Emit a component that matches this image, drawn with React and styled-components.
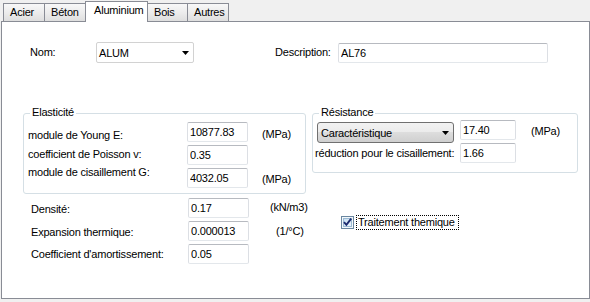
import React from "react";
import styled, { createGlobalStyle } from "styled-components";

const GlobalStyle = createGlobalStyle`
  html, body {
    margin: 0;
    padding: 0;
  }
  body {
    background: #f0f0f0;
    color: #000;
    font-family: "Liberation Sans", Arial, sans-serif;
    font-size: 11px;
    letter-spacing: -0.2px;
  }
`;

const Window = styled.div`
  width: 590px;
  height: 302px;
  background: #f0f0f0;
  overflow: hidden;
`;

const TabStrip = styled.div`
  position: relative;
  z-index: 1;
  display: flex;
  align-items: flex-end;
  height: 21px;
  padding-left: 4px;
`;

const Tab = styled.div`
  box-sizing: border-box;
  width: ${(p) => p.$w}px;
  height: ${(p) => (p.$active ? 21 : 18)}px;
  margin-left: -1px;
  margin-bottom: ${(p) => (p.$active ? -1 : 0)}px;
  padding: 2px 0 0 ${(p) => (p.$active ? 8 : 6)}px;
  border: 1px solid #898c95;
  border-bottom: none;
  background: ${(p) =>
    p.$active ? "#fff" : "linear-gradient(#f8f8f8, #ebebeb 55%, #dedede)"};
  line-height: 13px;
  white-space: nowrap;
`;

const Panel = styled.div`
  box-sizing: border-box;
  width: 589px;
  height: 278px;
  margin-left: 1px;
  border: 1px solid #898c95;
  background: #fff;
`;

const TopRow = styled.div`
  display: flex;
  align-items: center;
  height: 21px;
  margin-top: 20px;
  padding-left: 28px;
`;

const FieldLabel = styled.div`
  width: ${(p) => p.$w}px;
  margin-left: ${(p) => p.$ml || 0}px;
  line-height: ${(p) => p.$lh || 13}px;
  white-space: nowrap;
`;

const TextBox = styled.input`
  box-sizing: border-box;
  width: ${(p) => p.$w}px;
  height: 20px;
  margin: 0;
  padding: 0 2px;
  border: 1px solid;
  border-color: #b7bac0 #dcdfe4 #e3e7eb #dcdfe4;
  border-radius: 2px;
  background: #fff;
  color: #000;
  font-family: inherit;
  font-size: 11px;
  letter-spacing: -0.2px;
  outline: none;
`;

const Combo = styled.div`
  box-sizing: border-box;
  display: flex;
  align-items: center;
  justify-content: space-between;
  width: ${(p) => p.$w}px;
  height: 21px;
  margin-left: ${(p) => p.$ml || 0}px;
  padding: 0 4px 0 ${(p) => (p.$button ? 3 : 2)}px;
  border: 1px solid ${(p) => (p.$button ? "#707070" : "#d2d2d2")};
  border-radius: ${(p) => (p.$button ? 3 : 2)}px;
  background: ${(p) =>
    p.$button
      ? "linear-gradient(#f2f2f2, #ebebeb 49%, #dddddd 50%, #cfcfcf)"
      : "#fff"};
  white-space: nowrap;
`;

const Arrow = () => (
  <svg width="7" height="4" viewBox="0 0 7 4">
    <path d="M0 0h7L3.5 4z" fill="#000" />
  </svg>
);

const GroupsRow = styled.div`
  display: flex;
  align-items: flex-start;
  margin-top: 50px;
  padding-left: 21px;
`;

const Group = styled.div`
  position: relative;
  box-sizing: border-box;
  display: flex;
  align-items: flex-start;
  width: ${(p) => p.$w}px;
  height: ${(p) => p.$h}px;
  margin-left: ${(p) => p.$ml || 0}px;
  padding-left: ${(p) => p.$pl || 0}px;
  border: 1px solid #d5dfe5;
  border-radius: 3px;
`;

const Legend = styled.span`
  position: absolute;
  top: -8px;
  left: 6px;
  padding: 0 2px;
  background: #fff;
  line-height: 13px;
`;

const Column = styled.div`
  display: flex;
  flex-direction: column;
  align-items: flex-start;
  gap: ${(p) => p.$gap || 0}px;
  width: ${(p) => (p.$w ? `${p.$w}px` : "auto")};
  margin-left: ${(p) => p.$ml || 0}px;
  margin-top: ${(p) => p.$mt || 0}px;
  padding-top: ${(p) => p.$pt || 0}px;
  padding-left: ${(p) => p.$pl || 0}px;
`;

const Unit = styled.div`
  margin-top: ${(p) => p.$mt || 0}px;
  margin-left: ${(p) => p.$ml || 0}px;
  line-height: ${(p) => p.$lh || 13}px;
  white-space: nowrap;
`;

const BottomRow = styled.div`
  display: flex;
  align-items: flex-start;
  margin-top: 4px;
  padding-left: 29px;
`;

const CheckWrap = styled.label`
  display: flex;
  align-items: center;
  gap: 2px;
  height: 15px;
  margin-top: 17px;
`;

const CheckText = styled.span`
  padding: 0 3px 0 1px;
  border: 1px dotted #000;
  line-height: 13px;
  white-space: nowrap;
`;

const CheckBox = () => (
  <svg width="13" height="13" viewBox="0 0 13 13">
    <defs>
      <linearGradient id="cbFill" x1="0" y1="0" x2="1" y2="1">
        <stop offset="0" stopColor="#c6def2" />
        <stop offset="1" stopColor="#eef5fb" />
      </linearGradient>
    </defs>
    <rect x="0.5" y="0.5" width="12" height="12" fill="#f4f8fb" stroke="#6a87a0" />
    <rect x="2.5" y="2.5" width="8" height="8" fill="url(#cbFill)" stroke="#9bbad4" />
    <path d="M3 6.2 L5.4 8.8 L10.2 2.6" stroke="#1c2a6e" strokeWidth="1.9" fill="none" />
  </svg>
);

const tabs = [
  { label: "Acier", w: 42 },
  { label: "Béton", w: 42 },
  { label: "Aluminium", w: 63, active: true },
  { label: "Bois", w: 41 },
  { label: "Autres", w: 42 },
];

const App = () => {
  return (
    <>
      <GlobalStyle />
      <Window>
        <TabStrip>
          {tabs.map((t) => (
            <Tab key={t.label} $w={t.w} $active={t.active}>
              {t.label}
            </Tab>
          ))}
        </TabStrip>
        <Panel>
          <TopRow>
            <FieldLabel $w={66}>Nom:</FieldLabel>
            <Combo $w={98}>
              <span>ALUM</span>
              <Arrow />
            </Combo>
            <FieldLabel $w={63} $ml={81}>Description:</FieldLabel>
            <TextBox $w={210} readOnly value="AL76" />
          </TopRow>

          <GroupsRow>
            <Group $w={283} $h={81} $pl={4}>
              <Legend>Elasticité</Legend>
              <Column $w={159} $pt={12}>
                <FieldLabel $lh={18.5}>module de Young E:</FieldLabel>
                <FieldLabel $lh={18.5}>coefficient de Poisson v:</FieldLabel>
                <FieldLabel $lh={18.5}>module de cisaillement G:</FieldLabel>
              </Column>
              <Column $pt={8} $gap={3}>
                <TextBox $w={61} readOnly value="10877.83" />
                <TextBox $w={61} readOnly value="0.35" />
                <TextBox $w={61} readOnly value="4032.05" />
              </Column>
              <Column $ml={14} $pt={14}>
                <Unit>(MPa)</Unit>
                <Unit $mt={32}>(MPa)</Unit>
              </Column>
            </Group>

            <Group $w={266} $h={60} $ml={6}>
              <Legend>Résistance</Legend>
              <Column $w={145} $pt={8} $pl={2}>
                <Combo $w={137} $ml={2} $button>
                  <span>Caractéristique</span>
                  <Arrow />
                </Combo>
                <Unit $mt={4}>réduction pour le cisaillement:</Unit>
              </Column>
              <Column $pt={6} $gap={3}>
                <TextBox $w={56} readOnly value="17.40" />
                <TextBox $w={56} readOnly value="1.66" />
              </Column>
              <Column $ml={15} $pt={11}>
                <Unit>(MPa)</Unit>
              </Column>
            </Group>
          </GroupsRow>

          <BottomRow>
            <Column $w={157}>
              <FieldLabel $lh={22.5}>Densité:</FieldLabel>
              <FieldLabel $lh={22.5}>Expansion thermique:</FieldLabel>
              <FieldLabel $lh={22.5}>Coefficient d'amortissement:</FieldLabel>
            </Column>
            <Column $gap={3}>
              <TextBox $w={61} readOnly value="0.17" />
              <TextBox $w={61} readOnly value="0.000013" />
              <TextBox $w={61} readOnly value="0.05" />
            </Column>
            <Column $w={71} $ml={21} $mt={-3}>
              <Unit $lh={24}>(kN/m3)</Unit>
              <Unit $lh={24} $ml={6}>(1/°C)</Unit>
            </Column>
            <CheckWrap>
              <CheckBox />
              <CheckText>Traitement themique</CheckText>
            </CheckWrap>
          </BottomRow>
        </Panel>
      </Window>
    </>
  );
};

export default App;
